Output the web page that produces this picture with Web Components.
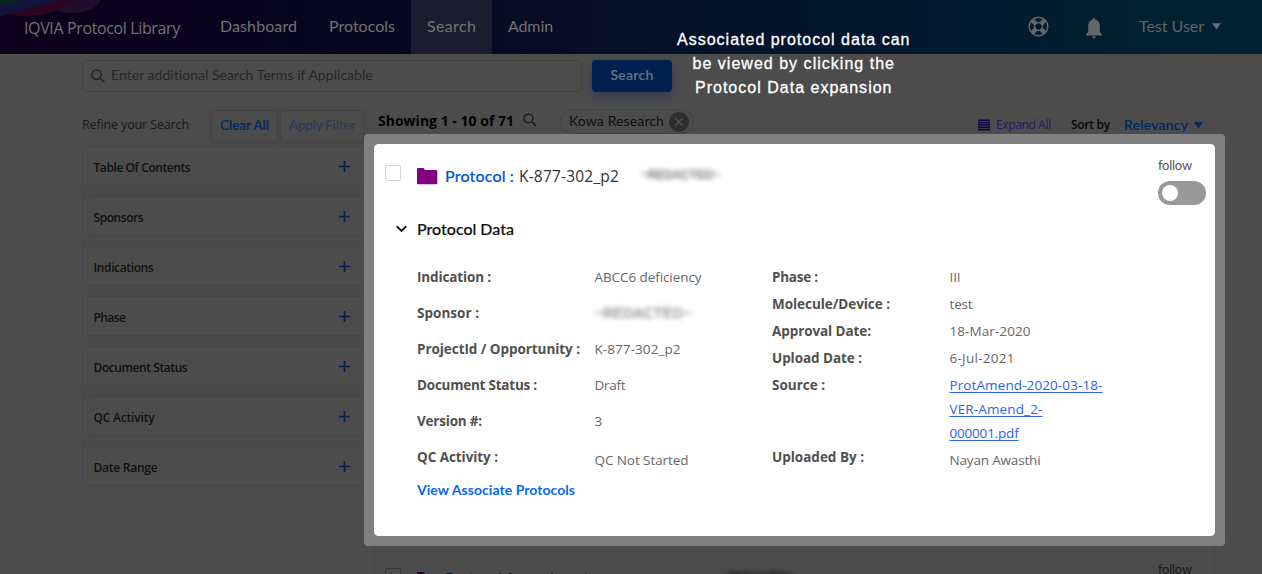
<!DOCTYPE html>
<html lang="en">
<head>
<meta charset="utf-8">
<title>IQVIA Protocol Library</title>
<style>
html,body{margin:0;padding:0;width:1262px;height:574px;overflow:hidden;background:#4c4c4c}
</style>
</head>
<body>
<library-app></library-app>
<script>
const define = (name, html, setup) => {
  const tpl = document.createElement('template');
  tpl.innerHTML = html;
  customElements.define(name, class extends HTMLElement {
    connectedCallback() {
      if (this.shadowRoot) return;
      this.attachShadow({ mode: 'open' }).appendChild(tpl.content.cloneNode(true));
      if (setup) setup(this, this.shadowRoot);
    }
  });
};

// Single line of text, tracked so that it fills the width given in "w".
define('fit-text', `<style>
:host{display:block;white-space:nowrap;flex:none;line-height:20px}
span{display:inline-block;white-space:nowrap}
:host([f=p]){font-family:Lato,sans-serif}
:host([f=s]){font-family:"Open Sans",sans-serif}
:host([f=a]){font-family:"Liberation Sans",sans-serif}
:host([f=p][b="500"]){-webkit-text-stroke:.18px currentColor}
:host([blur]){filter:blur(2.6px)}
</style><span></span>`, (el, root) => {
  const s = root.querySelector('span');
  s.textContent = el.getAttribute('t');
  if (el.hasAttribute('s')) el.style.fontSize = el.getAttribute('s') + 'px';
  if (el.hasAttribute('b')) el.style.fontWeight = el.getAttribute('b');
  if (el.hasAttribute('c')) el.style.color = el.getAttribute('c');
  if (el.hasAttribute('dy')) s.style.transform = 'translateY(' + el.getAttribute('dy') + 'px)';
  const w = parseFloat(el.getAttribute('w'));
  if (w) {
    el.style.width = w + 'px';
    const n = s.textContent.length;
    if (n > 1) s.style.letterSpacing = ((w - s.getBoundingClientRect().width) / (n - .5)) + 'px';
  }
});

define('app-header', `<style>
:host{display:flex;height:54px;position:relative;overflow:hidden;align-items:stretch;box-sizing:border-box;
background:linear-gradient(90deg,#0d001b 0,#09031d 15%,#060a21 36%,#04132a 58%,#001a2f 76%,#002331 100%);color:#727272}
.blobs{position:absolute;left:0;top:0}
fit-text{display:flex;align-items:center}
.brand{padding-left:24px;width:171px;padding-right:0;display:flex;align-items:center;padding-top:2px}
nav{display:flex}
nav div{display:flex;align-items:center;padding:0 16px 2px}
.on{background:#1b1c2e}
.right{margin-left:auto;display:flex;align-items:center;padding-right:41px}
.right svg{display:block}
</style>
<svg class="blobs" width="100" height="20"><ellipse cx="72" cy="-6" rx="31" ry="19" fill="#210d2a"/><path d="M0 0H76Q52 16 26 16Q10 16 0 12Z" fill="#2b0620"/><path d="M0 0H59Q32 8 0 16Z" fill="#10133c"/><path d="M0 0H24Q10 4 0 5Z" fill="#06251d"/></svg>
<div class="brand"><fit-text f="s" s="16" t="IQVIA Protocol Library" w="156"></fit-text></div>
<nav style="margin-left:9px">
<div><fit-text f="p" s="16" t="Dashboard" w="77"></fit-text></div>
<div><fit-text f="p" s="16" t="Protocols" w="66"></fit-text></div>
<div class="on"><fit-text f="p" s="16" t="Search" w="49" c="#737373"></fit-text></div>
<div><fit-text f="p" s="16" t="Admin" w="45"></fit-text></div>
</nav>
<div class="right">
<svg width="21" height="21" viewBox="0 0 21 21" style="margin:-2px 37px 0 0"><g transform="rotate(45 10.5 10.5)"><circle cx="10.5" cy="10.5" r="9.3" fill="none" stroke="#666" stroke-width="1.5"/><circle cx="10.5" cy="10.5" r="3.9" fill="none" stroke="#666" stroke-width="1.5"/><path d="M8.3 1.5H12.7V7H8.3ZM8.3 14H12.7V19.5H8.3ZM1.5 8.3H7V12.7H1.5ZM14 8.3H19.5V12.7H14Z" fill="#666"/></g></svg>
<svg width="16" height="21" viewBox="0 0 16 21" style="margin-right:37px;position:relative;top:1px"><path d="M8 0Q9.3 0 9.3 1.6Q13.8 3 13.8 8.2V14L16 16.4V17.5H0V16.4L2.2 14V8.2Q2.2 3 6.7 1.6Q6.7 0 8 0ZM6 18.4H10Q9.7 20.4 8 20.4T6 18.4Z" fill="#666"/></svg>
<fit-text f="p" s="16" t="Test User" w="65" c="#5d676c" dy="-1"></fit-text>
<svg width="9" height="7" viewBox="0 0 9 7" style="margin-left:8px;margin-top:-1px"><path d="M0 .3H9L4.5 6.5Z" fill="#6b7174"/></svg>
</div>`);

define('search-bar', `<style>
:host{display:flex;gap:10px;padding:6px 0 0 82px;height:32px}
.in{box-sizing:border-box;width:500px;height:32px;border:1px solid #424242;border-radius:4px;display:flex;align-items:center;padding-left:8px;gap:6px}
.btn{width:80px;height:32px;border-radius:4px;background:#00204f;display:flex;align-items:center;justify-content:center;box-shadow:0 4px 8px #303d50}
</style>
<div class="in"><svg width="14" height="14" viewBox="0 0 14 14" fill="none" stroke="#252525" stroke-width="1.6"><circle cx="5.6" cy="5.6" r="4.6"/><path d="M9 9L13.4 13.4"/></svg><fit-text f="p" s="14" t="Enter additional Search Terms if Applicable" w="262" c="#272727" dy="-1"></fit-text></div>
<div class="btn"><fit-text f="p" s="14" b="500" t="Search" w="43" c="#687384" dy="-1"></fit-text></div>`);

define('filter-panel', `<style>
:host{display:flex;box-sizing:border-box;width:290px;height:40px;border:1px solid #464646;box-shadow:0 2px 8px #4848484d;padding:0 12px 0 10.5px;align-items:center;justify-content:space-between}
svg{margin-right:9px;display:block}
</style><slot></slot><svg width="11" height="11" viewBox="0 0 11 11"><path d="M5.5 0V11M0 5.5H11" stroke="#002152" stroke-width="1.7"/></svg>`);

define('filter-sidebar', `<style>
:host{display:block;width:292px;overflow:hidden}
.top{display:flex;height:32px;margin-bottom:4px;padding-top:4px}
.top>fit-text{padding-top:5px;margin-right:22px}
.b{box-sizing:border-box;height:33px;border:1px solid #434343;border-radius:4px;display:flex;align-items:center;justify-content:center;box-shadow:0 0 4px #4646464d}
.list{display:grid;gap:10px}
</style>
<div class="top"><fit-text f="s" s="12.5" t="Refine your Search" w="107" c="#181818"></fit-text>
<div class="b" style="width:67px;margin-right:2px"><fit-text f="p" s="13.5" b="500" t="Clear All" w="49" c="#002864" dy="-2"></fit-text></div>
<div class="b" style="width:84px"><fit-text f="p" s="13.5" b="500" t="Apply Filter" w="66" c="#2b3c58" dy="-2"></fit-text></div></div>
<div class="list">
<filter-panel><fit-text f="s" s="12" b="600" t="Table Of Contents" w="97" c="#101010" dy="2"></fit-text></filter-panel>
<filter-panel><fit-text f="s" s="12" b="600" t="Sponsors" w="50" c="#101010" dy="2"></fit-text></filter-panel>
<filter-panel><fit-text f="s" s="12" b="600" t="Indications" w="60" c="#101010" dy="2"></fit-text></filter-panel>
<filter-panel><fit-text f="s" s="12" b="600" t="Phase" w="32" c="#101010" dy="2"></fit-text></filter-panel>
<filter-panel><fit-text f="s" s="12" b="600" t="Document Status" w="94" c="#101010" dy="2"></fit-text></filter-panel>
<filter-panel><fit-text f="s" s="12" b="600" t="QC Activity" w="61" c="#101010" dy="2"></fit-text></filter-panel>
<filter-panel><fit-text f="s" s="12" b="600" t="Date Range" w="64" c="#101010" dy="2"></fit-text></filter-panel>
</div>`);

define('results-bar', `<style>
:host{display:flex;height:38px;padding:0 12px 0 4px;align-items:flex-start;box-sizing:border-box}
.chip{box-sizing:border-box;width:134px;height:25px;border:1px solid #434343;border-radius:13px;margin:3px 0 0 23px;padding-left:8px;display:flex;align-items:center;gap:5px}
.r{margin-left:auto;display:flex;align-items:center;padding-top:9px}
svg{display:block;flex:none}
</style>
<fit-text f="s" s="14" b="700" t="Showing 1 - 10 of 71" w="136" c="#000" style="padding-top:5px"></fit-text>
<svg width="14" height="14" viewBox="0 0 14 14" fill="none" stroke="#111" stroke-width="1.2" style="margin:7px 0 0 9px"><circle cx="5.5" cy="5.5" r="4.5"/><path d="M9 9L13 13"/></svg>
<div class="chip"><fit-text f="p" s="14" t="Kowa Research" w="95" c="#0e0e0e" dy="-1"></fit-text><svg width="20" height="20" viewBox="0 0 20 20"><circle cx="10" cy="10" r="10" fill="#2d2d2d"/><path d="M6.2 6.2L13.8 13.8M13.8 6.2L6.2 13.8" stroke="#4f4f4f" stroke-width="1.6"/></svg></div>
<div class="r"><svg width="12" height="12" viewBox="0 0 12 12" stroke="#12004f" stroke-width="1.6"><path d="M0 1.2H12M0 3.6H12M0 6H12M0 8.4H12M0 10.8H12"/></svg>
<fit-text f="s" s="12" t="Expand All" w="55" c="#241a64" style="margin:0 20px 0 6px"></fit-text>
<fit-text f="s" s="12" b="600" t="Sort by" w="39" c="#080808" style="margin-right:14px"></fit-text>
<fit-text f="p" s="14" b="500" t="Relevancy" w="64" c="#002864"></fit-text>
<svg width="9" height="7" viewBox="0 0 9 7" style="margin-left:6px"><path d="M0 .3H9L4.5 6.5Z" fill="#002864"/></svg></div>`);

define('toggle-switch', `<style>
:host{display:block;box-sizing:border-box;width:48px;height:24px;border-radius:12px;background:#999;padding:4px}
i{display:block;width:16px;height:16px;border-radius:50%;background:#fff}
</style><i></i>`);

// One label / value pair; "h" is the row height and "vy" shifts the value down.
define('data-row', `<style>
:host{display:grid;grid-template-columns:177.5px 1fr;align-items:start}
</style><fit-text f="s" s="13.5" b="700" c="#505050"></fit-text><div><slot></slot></div>`, (el, root) => {
  el.style.height = (el.getAttribute('h') || 36) + 'px';
  const t = root.querySelector('fit-text');
  const fresh = t.cloneNode(false);
  fresh.setAttribute('t', el.getAttribute('l'));
  fresh.setAttribute('w', el.getAttribute('lw'));
  t.replaceWith(fresh);
  if (el.hasAttribute('vy')) root.querySelector('div').style.paddingTop = el.getAttribute('vy') + 'px';
});

define('protocol-card', `<style>
:host{display:block;position:relative;box-sizing:border-box;width:841px;height:392px;background:#fff;border-radius:4px;padding:18px 9px 0 11px}
:host::before{content:"";position:absolute;inset:-10px;border:10px solid #808080;border-radius:4px;pointer-events:none}
:host::after{content:"";position:absolute;inset:0;border-radius:4px;box-shadow:0 0 0 3px #808080;pointer-events:none}
.head{display:flex;height:57px;align-items:flex-start}
.cb{box-sizing:border-box;width:16px;height:16px;border:1px solid #d5d5d5;border-radius:2px;margin-top:3px}
.follow{margin-left:auto;width:48px;margin-top:-7px}
.sec{display:flex;align-items:center;height:20px;padding-left:11px;gap:10px}
.data{display:grid;grid-template-columns:355px 1fr;padding:28px 0 0 32px}
svg{display:block}
</style>
<div class="head"><div class="cb"></div>
<svg width="21" height="17" viewBox="0 0 21 17" style="margin:6px 0 0 16px"><path d="M1 0H6Q6.8 0 7.2 .8L8 2H19.3Q20.3 2 20.3 3V15.3Q20.3 16.3 19.3 16.3H1Q0 16.3 0 15.3V1Q0 0 1 0Z" fill="#800080"/></svg>
<fit-text f="p" s="16" b="500" t="Protocol :" w="69" c="#0557d5" style="margin:4px 0 0 7px"></fit-text>
<fit-text f="s" s="15.5" t="K-877-302_p2" w="100" c="#333" style="margin:4px 0 0 5px"></fit-text>
<fit-text f="a" s="12" b="700" blur t="~REDACTED~" w="79" c="#777" style="margin:3px 0 0 22px"></fit-text>
<div class="follow"><fit-text f="p" s="13" t="follow" w="34" c="#555"></fit-text><toggle-switch style="margin-top:6px"></toggle-switch></div></div>
<div class="sec"><svg width="11" height="8" viewBox="0 0 11 8"><path d="M.8 1.2L5.5 6L10.2 1.2" fill="none" stroke="#111" stroke-width="1.9"/></svg><fit-text f="p" s="16" b="500" t="Protocol Data" w="97" c="#111"></fit-text></div>
<div class="data"><div>
<data-row l="Indication :" lw="74"><fit-text f="s" s="13.5" t="ABCC6 deficiency" w="107" c="#666"></fit-text></data-row>
<data-row l="Sponsor :" lw="62"><fit-text f="a" s="14" b="500" blur t="~REDACTED~" w="97" c="#606060"></fit-text></data-row>
<data-row l="ProjectId / Opportunity :" lw="163"><fit-text f="s" s="13.5" t="K-877-302_p2" w="86" c="#666"></fit-text></data-row>
<data-row l="Document Status :" lw="120"><fit-text f="s" s="13.5" t="Draft" w="31" c="#666"></fit-text></data-row>
<data-row l="Version #:" lw="65"><fit-text f="s" s="13.5" t="3" c="#666"></fit-text></data-row>
<data-row l="QC Activity :" lw="81" h="33" vy="3"><fit-text f="s" s="13.5" t="QC Not Started" w="94" c="#666"></fit-text></data-row>
<fit-text f="p" s="14" b="700" t="View Associate Protocols" w="158" c="#0768ed"></fit-text>
</div><div>
<data-row h="27" l="Phase :" lw="46"><fit-text f="s" s="13.5" t="III" w="11" c="#666"></fit-text></data-row>
<data-row h="27" l="Molecule/Device :" lw="118"><fit-text f="s" s="13.5" t="test" w="23" c="#666"></fit-text></data-row>
<data-row h="27" l="Approval Date:" lw="99"><fit-text f="s" s="13.5" t="18-Mar-2020" w="81" c="#666"></fit-text></data-row>
<data-row h="27" l="Upload Date :" lw="90"><fit-text f="s" s="13.5" t="6-Jul-2021" w="65" c="#666"></fit-text></data-row>
<data-row h="72" l="Source :" lw="53"><div style="display:grid;gap:4px"><doc-link t="ProtAmend-2020-03-18-" w="153"></doc-link><doc-link t="VER-Amend_2-" w="93"></doc-link><doc-link t="000001.pdf" w="69"></doc-link></div></data-row>
<data-row l="Uploaded By :" lw="92" vy="3"><fit-text f="s" s="13.5" t="Nayan Awasthi" w="91" c="#666"></fit-text></data-row>
</div></div>`);

define('doc-link', `<style>
:host{display:block;height:20px;font:13.5px/20px "Open Sans",sans-serif}
a{display:inline-block;white-space:nowrap;text-decoration:underline;text-decoration-skip-ink:none;text-underline-offset:2px;color:#2e5fe8}
</style><a></a>`, (el, root) => {
  const a = root.querySelector('a');
  a.textContent = el.getAttribute('t');
  const w = parseFloat(el.getAttribute('w'));
  a.style.letterSpacing = ((w - a.getBoundingClientRect().width) / a.textContent.length) + 'px';
});

// Top of the following result, cut off by the window.
define('next-card', `<style>
:host{display:flex;box-sizing:border-box;width:841px;height:100px;border:1px solid #454545;border-top:0;margin-top:11px;padding:15px 8px 0 10px;align-items:flex-start}
.cb{box-sizing:border-box;width:16px;height:16px;border:1px solid #383838;border-radius:2px;margin-top:6px}
.follow{margin-left:auto;width:48px;margin-top:-3px}
</style><div class="cb"></div>
<svg width="21" height="17" viewBox="0 0 21 17" style="margin:10px 0 0 16px"><path d="M1 0H6Q6.8 0 7.2 .8L8 2H20V15H0V1Q0 0 1 0Z" fill="#260026"/></svg>
<fit-text f="p" s="16" b="500" t="Protocol Amendment :" w="151" c="#001b42" style="margin:6px 0 0 7px"></fit-text>
<fit-text f="s" s="15" t="K-877-302" w="74" c="#111" style="margin:6px 0 0 25px"></fit-text>
<fit-text f="a" s="12" b="700" blur t="~REDACTED~" w="72" c="#111" style="margin:5px 0 0 28px"></fit-text>
<div class="follow"><fit-text f="p" s="13" t="follow" w="34" c="#1a1a1a"></fit-text></div>`);

define('tour-caption', `<style>
:host{position:absolute;left:677px;top:30px;width:233px;display:grid;justify-items:center;gap:4px;color:#fff;-webkit-text-stroke:.3px #fff}
</style>
<fit-text f="a" s="16" t="Associated protocol data can" w="233"></fit-text>
<fit-text f="a" s="16" t="be viewed by clicking the" w="202"></fit-text>
<fit-text f="a" s="16" t="Protocol Data expansion" w="197"></fit-text>`);

define('library-app', `<style>
:host{display:block;position:relative;width:1262px;height:574px;overflow:hidden;background:#4c4c4c}
main{display:grid;grid-template-columns:292px 841px;padding:14px 0 0 82px}
</style>
<app-header></app-header>
<search-bar></search-bar>
<main><filter-sidebar></filter-sidebar>
<section><results-bar></results-bar><protocol-card></protocol-card><next-card></next-card></section></main>
<tour-caption></tour-caption>`);
</script>
</body>
</html>
